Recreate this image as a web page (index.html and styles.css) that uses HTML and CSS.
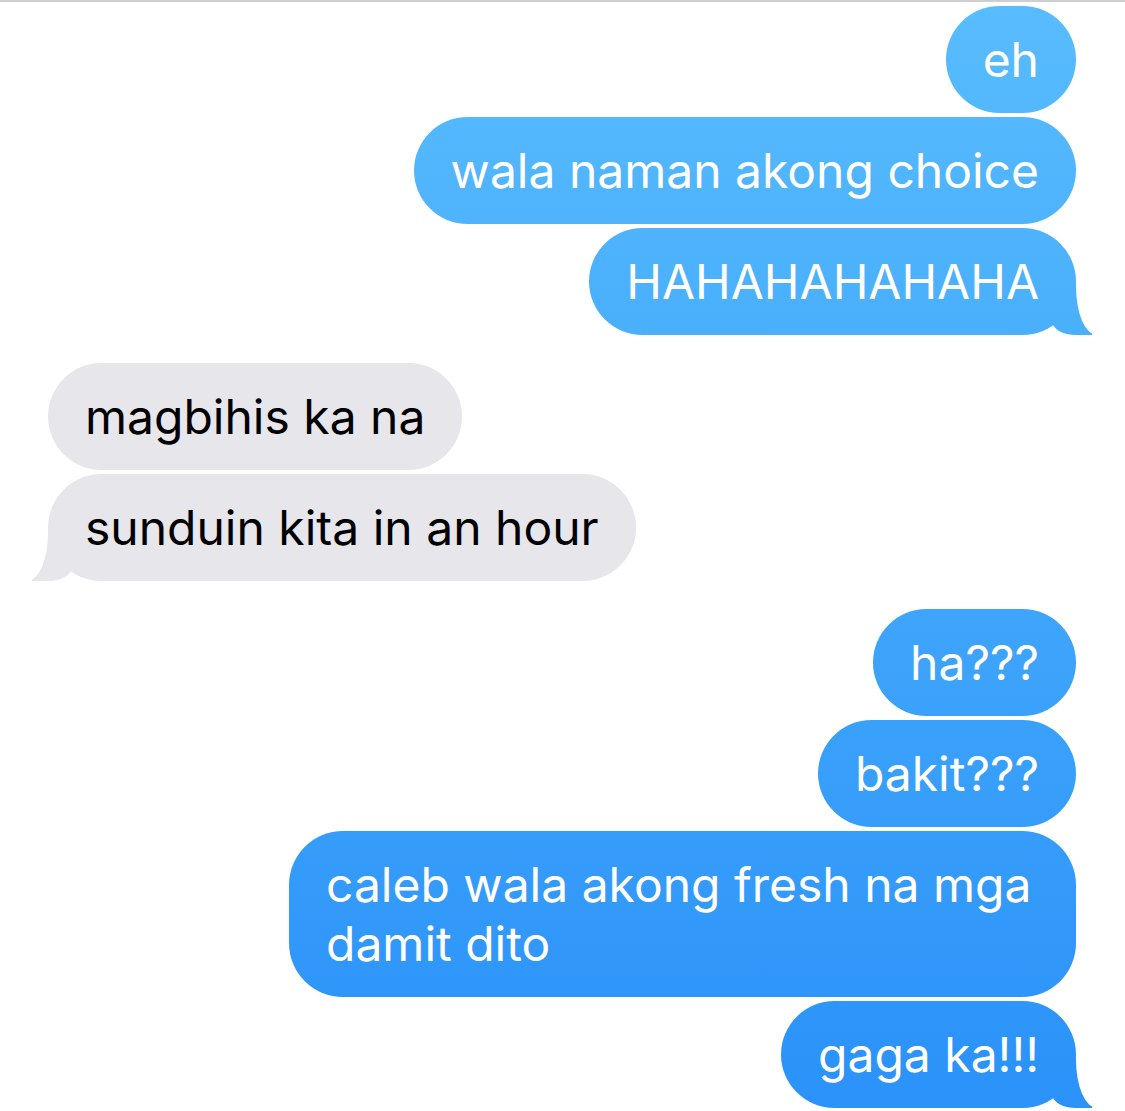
FILE: index.html
```html
<!DOCTYPE html>
<html lang="tl">
<head>
    <meta charset="UTF-8">
    <title>Messages</title>
    <link rel="stylesheet" href="styles.css">
</head>
<body>
    <div class="thread">
        <div class="group sent">
            <div class="bubble">eh</div>
            <div class="bubble">wala naman akong choice</div>
            <div class="bubble tail">HAHAHAHAHAHA</div>
        </div>
        <div class="group received">
            <div class="bubble">magbihis ka na</div>
            <div class="bubble tail">sunduin kita in an hour</div>
        </div>
        <div class="group sent">
            <div class="bubble">ha???</div>
            <div class="bubble">bakit???</div>
            <div class="bubble">caleb wala akong fresh na mga damit dito</div>
            <div class="bubble tail">gaga ka!!!</div>
        </div>
    </div>
</body>
</html>
```
FILE: styles.css
```css
body {
    margin: 0;
    padding: 0;
    background: #fff;
    font-family: 'Inter', 'Liberation Sans', sans-serif;
    overflow: hidden;
}

.thread {
    border-top: 2px solid #cfcfd2;
    padding: 4px 49px 0 48px;
    display: flex;
    flex-direction: column;
    gap: 28px;
}

.group {
    display: flex;
    flex-direction: column;
    gap: 4px;
}

.group.sent {
    align-items: flex-end;
}

.group.received {
    align-items: flex-start;
}

.bubble {
    position: relative;
    box-sizing: border-box;
    max-width: 787px;
    padding: 24px 37px;
    border-radius: 54px;
    font-size: 48px;
    line-height: 59px;
}

.sent .bubble {
    color: #fff;
    background: linear-gradient(#58bcfd, #2a92f9) fixed;
}

.received .bubble {
    color: #000;
    background: #e6e6eb;
}

/* cola da bolha */
.bubble.tail::before,
.bubble.tail::after {
    content: "";
    position: absolute;
    bottom: 0;
    height: 50px;
}

.sent .bubble.tail::before {
    right: -16px;
    width: 40px;
    background: inherit;
    border-bottom-left-radius: 24px 14px;
}

.sent .bubble.tail::after {
    right: -40px;
    width: 40px;
    background: #fff;
    border-bottom-left-radius: 21px 48px;
}

.received .bubble.tail::before {
    left: -16px;
    width: 40px;
    background: #e6e6eb;
    border-bottom-right-radius: 24px 14px;
}

.received .bubble.tail::after {
    left: -40px;
    width: 40px;
    background: #fff;
    border-bottom-right-radius: 21px 48px;
}
```
